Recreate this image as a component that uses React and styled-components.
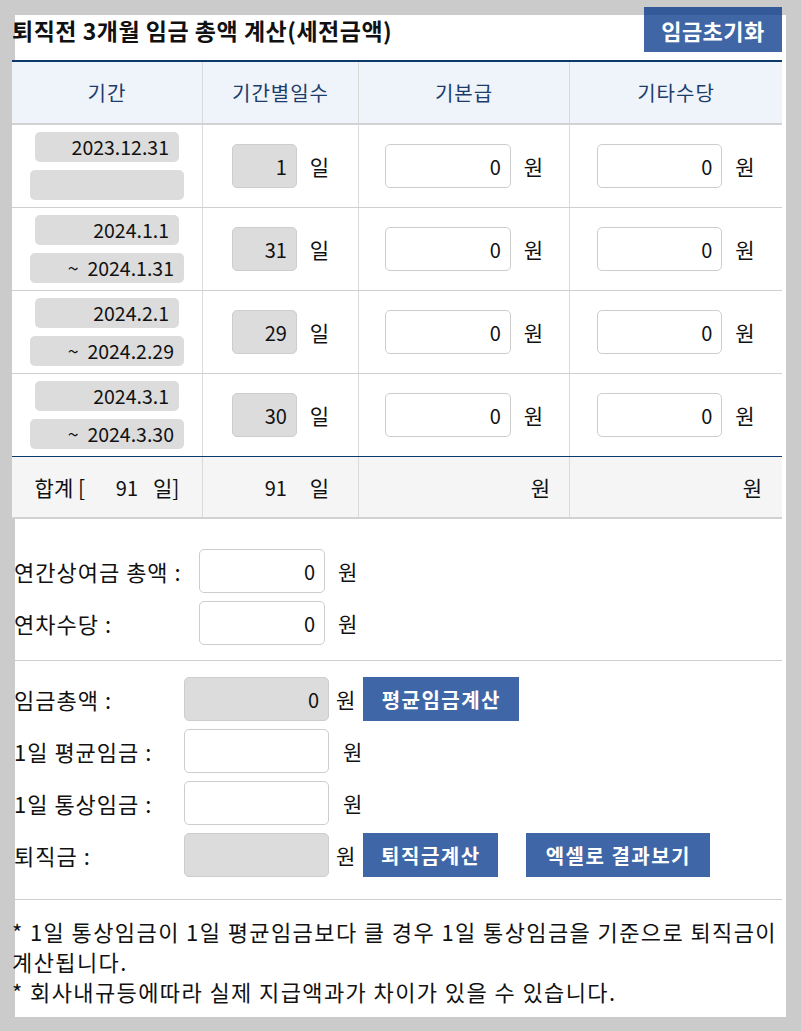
import React from 'react';
import styled, { createGlobalStyle } from 'styled-components';

const GlobalStyle = createGlobalStyle`
  body {
    margin: 0;
    background: #cbcbcb;
    font-family: "Noto Sans CJK KR", "Noto Sans", sans-serif;
    color: #111;
  }
`;

const COLS = '191px 156px 211px 212px';

const Panel = styled.div`
  display: flow-root;
  margin: 15px 0 0 15px;
  width: 771px;
  background: #fff;
  padding-bottom: 11px;
`;

const Inner = styled.div`
  margin-left: -3px;
  width: 770px;
`;

const TitleBar = styled.div`
  display: flex;
  align-items: center;
  justify-content: space-between;
  height: 45px;
  margin-top: -8px;
  margin-bottom: 8px;
`;

const Title = styled.h1`
  margin: 0;
  font-size: 23px;
  font-weight: 700;
  letter-spacing: 0.5px;
  color: #111;
`;

const BlueButton = styled.button`
  width: ${p => p.w}px;
  height: ${p => p.h || 44}px;
  border: none;
  background: ${p => (p.fade ? 'rgba(0, 51, 136, 0.75)' : '#3f67a7')};
  color: #fff;
  font-family: inherit;
  font-size: ${p => p.fs || 20}px;
  font-weight: 700;
  letter-spacing: ${p => p.ls ?? 1.5}px;
  padding: 0;
  margin-left: ${p => p.ml || 0}px;
  cursor: pointer;
`;

const Table = styled.div`
  border-top: 2px solid #0b3a6a;
`;

const Row = styled.div`
  display: grid;
  grid-template-columns: ${COLS};
  height: ${p => p.h}px;
  box-sizing: border-box;
  background: ${p => p.bg || '#fff'};
  border-bottom: ${p => p.bb || '1px solid #cfcfcf'};
`;

const Cell = styled.div`
  display: flex;
  align-items: center;
  justify-content: ${p => p.justify || 'center'};
  gap: ${p => p.gap ?? 13}px;
  padding-right: ${p => p.pr || 0}px;
  border-right: 1px solid #dadada;
  font-size: 21px;
  &:last-child {
    border-right: none;
  }
`;

const HeadText = styled.span`
  font-size: 20px;
  letter-spacing: 1px;
  color: #1c3d6b;
`;

const DateBox = styled.div`
  box-sizing: border-box;
  width: ${p => p.w}px;
  height: 30px;
  border-radius: 5px;
  background: #dcdcdc;
  text-align: right;
  padding-right: 10px;
  font-size: 19.5px;
  line-height: 30px;
  white-space: pre;
`;

const DateStack = styled.div`
  display: flex;
  flex-direction: column;
  align-items: center;
  gap: 8px;
`;

const Field = styled.input`
  box-sizing: border-box;
  width: ${p => p.w}px;
  height: 44px;
  border: 1px solid #cdcdcd;
  border-radius: 5px;
  background: ${p => (p.gray ? '#dcdcdc' : '#fff')};
  text-align: right;
  padding: 0 9px 0 0;
  font-family: inherit;
  font-size: 20px;
  color: #111;
  outline: none;
`;

const Unit = styled.span`
  font-size: 21px;
  margin-left: ${p => p.ml || 0}px;
  color: #111;
`;

const SumNum = styled.span`
  display: inline-block;
  width: ${p => p.w}px;
  text-align: right;
  padding-right: ${p => p.pr || 10}px;
  font-size: 20px;
  box-sizing: border-box;
`;

const Section = styled.div`
  padding: ${p => p.pad};
  border-bottom: ${p => (p.line ? '1px solid #cfcfcf' : 'none')};
`;

const FormRow = styled.div`
  display: flex;
  align-items: center;
  height: 44px;
  & + & {
    margin-top: ${p => p.gap || 7}px;
  }
`;

const Label = styled.span`
  width: ${p => p.w}px;
  font-size: 22px;
  letter-spacing: 1px;
  padding-left: 2px;
  box-sizing: border-box;
`;

const Note = styled.p`
  margin: 0;
  font-size: 22px;
  letter-spacing: 1.4px;
  line-height: 30px;
  color: #111;
`;

const periods = [
  { from: '2023.12.31', to: '', days: 1 },
  { from: '2024.1.1', to: '~  2024.1.31', days: 31 },
  { from: '2024.2.1', to: '~  2024.2.29', days: 29 },
  { from: '2024.3.1', to: '~  2024.3.30', days: 30 },
];

function PeriodRow({ p, last }) {
  return (
    <Row h={83} bb={last ? '1px solid #0b3a6a' : undefined}>
      <Cell>
        <DateStack>
          <DateBox w={144}>{p.from}</DateBox>
          <DateBox w={154}>{p.to}</DateBox>
        </DateStack>
      </Cell>
      <Cell>
        <Field gray w={65} value={p.days} readOnly />
        <Unit>일</Unit>
      </Cell>
      <Cell>
        <Field w={126} value="0" readOnly />
        <Unit>원</Unit>
      </Cell>
      <Cell>
        <Field w={125} value="0" readOnly />
        <Unit>원</Unit>
      </Cell>
    </Row>
  );
}

export default function App() {
  return (
    <>
      <GlobalStyle />
      <Panel>
        <Inner>
          <TitleBar>
            <Title>퇴직전 3개월 임금 총액 계산(세전금액)</Title>
            <BlueButton fade w={138} h={45} fs={22} ls={0.5}>임금초기화</BlueButton>
          </TitleBar>

          <Table>
            <Row h={63} bg="#eff3fa" bb="2px solid #d2d2d2">
              <Cell><HeadText>기간</HeadText></Cell>
              <Cell><HeadText>기간별일수</HeadText></Cell>
              <Cell><HeadText>기본급</HeadText></Cell>
              <Cell><HeadText>기타수당</HeadText></Cell>
            </Row>
            {periods.map((p, i) => (
              <PeriodRow key={p.from} p={p} last={i === periods.length - 1} />
            ))}
            <Row h={62} bg="#f5f5f5" bb="2px solid #d2d2d2">
              <Cell gap={0}>
                합계 [<SumNum w={68} pr={15}>91</SumNum>일]
              </Cell>
              <Cell>
                <SumNum w={65}>91</SumNum>
                <Unit>일</Unit>
              </Cell>
              <Cell justify="flex-end" pr={19}>원</Cell>
              <Cell justify="flex-end" pr={20}>원</Cell>
            </Row>
          </Table>

          <Section pad="30px 0 15px" line>
            <FormRow>
              <Label w={187}>연간상여금 총액 :</Label>
              <Field w={126} value="0" readOnly />
              <Unit ml={13}>원</Unit>
            </FormRow>
            <FormRow>
              <Label w={187}>연차수당 :</Label>
              <Field w={126} value="0" readOnly />
              <Unit ml={13}>원</Unit>
            </FormRow>
          </Section>

          <Section pad="16px 0 22px" line>
            <FormRow gap={8}>
              <Label w={172}>임금총액 :</Label>
              <Field gray w={145} value="0" readOnly />
              <Unit ml={7}>원</Unit>
              <BlueButton w={156} ml={8}>평균임금계산</BlueButton>
            </FormRow>
            <FormRow gap={8}>
              <Label w={172}>1일 평균임금 :</Label>
              <Field w={145} value="" readOnly />
              <Unit ml={14}>원</Unit>
            </FormRow>
            <FormRow gap={7}>
              <Label w={172}>1일 통상임금 :</Label>
              <Field w={145} value="" readOnly />
              <Unit ml={14}>원</Unit>
            </FormRow>
            <FormRow gap={8}>
              <Label w={172}>퇴직금 :</Label>
              <Field gray w={145} value="" readOnly />
              <Unit ml={7}>원</Unit>
              <BlueButton w={135} ml={8}>퇴직금계산</BlueButton>
              <BlueButton w={184} ml={28}>엑셀로 결과보기</BlueButton>
            </FormRow>
          </Section>

          <Section pad="16px 0 0">
            <Note>
              * 1일 통상임금이 1일 평균임금보다 클 경우 1일 통상임금을 기준으로 퇴직금이
              계산됩니다.
            </Note>
            <Note>* 회사내규등에따라 실제 지급액과가 차이가 있을 수 있습니다.</Note>
          </Section>
        </Inner>
      </Panel>
    </>
  );
}
